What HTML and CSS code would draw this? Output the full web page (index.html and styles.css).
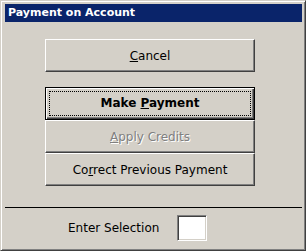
FILE: index.html
```html
<!DOCTYPE html>
<html lang="en">
<head>
    <meta charset="UTF-8">
    <title>Payment on Account</title>
    <link rel="stylesheet" href="styles.css">
</head>
<body>
    <div class="window">
        <div class="titlebar">Payment on Account</div>

        <div class="menu">
            <button class="btn btn-cancel"><span class="label"><u>C</u>ancel</span></button>

            <div class="btn-stack">
                <button class="btn btn-default"><span class="focus">Make <u>P</u>ayment</span></button>
                <button class="btn btn-disabled" disabled><span class="label"><u>A</u>pply Credits</span></button>
                <button class="btn"><span class="label">Co<u>r</u>rect Previous Payment</span></button>
            </div>
        </div>

        <div class="separator"></div>

        <div class="selection">
            <label for="sel">Enter Selection</label>
            <input id="sel" type="text" class="sel-box">
        </div>
    </div>
</body>
</html>
```

FILE: styles.css
```css
/* Base */
* {
    margin: 0;
    padding: 0;
    box-sizing: border-box;
}

body {
    width: 306px;
    height: 251px;
    background: #d4d0c8;
    font-family: 'DejaVu Sans', Tahoma, sans-serif;
    font-size: 12px;
    color: #000;
    overflow: hidden;
}

/* Window frame */
.window {
    width: 306px;
    height: 251px;
    background: #d4d0c8;
    border: 1px solid;
    border-color: #d4d0c8 #404040 #404040 #d4d0c8;
    box-shadow: inset 1px 1px #fff, inset -1px -1px #808080;
    padding: 3px 3px 0 4px;
    display: flex;
    flex-direction: column;
}

.titlebar {
    height: 18px;
    line-height: 18px;
    background: #0a246a;
    color: #fff;
    font-weight: bold;
    font-size: 11px;
    padding-left: 3px;
}

/* Buttons */
.menu {
    display: flex;
    flex-direction: column;
    padding: 17px 0 0 40px;
    gap: 15px;
}

.btn-stack {
    display: flex;
    flex-direction: column;
}

.btn {
    width: 210px;
    height: 33px;
    background: #d4d0c8;
    font-family: 'DejaVu Sans', Tahoma, sans-serif;
    font-size: 12px;
    color: #000;
    text-align: center;
    border: 1px solid;
    border-color: #fff #404040 #404040 #fff;
    box-shadow: inset -1px -1px #808080;
}

.label {
    display: block;
    line-height: 30px;
}

.btn-default {
    border: 1px solid #000;
    box-shadow: inset 1px 1px #fff, inset -1px -1px #404040, inset -2px -2px #808080;
    font-weight: bold;
    padding: 3px;
}

.focus {
    display: block;
    height: 100%;
    line-height: 23px;
    border: 1px dotted #000;
}

.btn-disabled {
    color: #808080;
    text-shadow: 1px 1px #fff;
}

/* Bottom area */
.separator {
    height: 1px;
    background: #000;
    margin-top: 21px;
}

.selection {
    display: flex;
    align-items: center;
    padding: 7px 0 0 63px;
    gap: 18px;
}

.selection label {
    margin-top: -1px;
}

.sel-box {
    width: 30px;
    height: 26px;
    background: #fff;
    border: 1px solid;
    border-color: #808080 #fff #fff #808080;
    box-shadow: inset 1px 1px #404040, inset -1px -1px #d4d0c8;
    outline: none;
}
```
